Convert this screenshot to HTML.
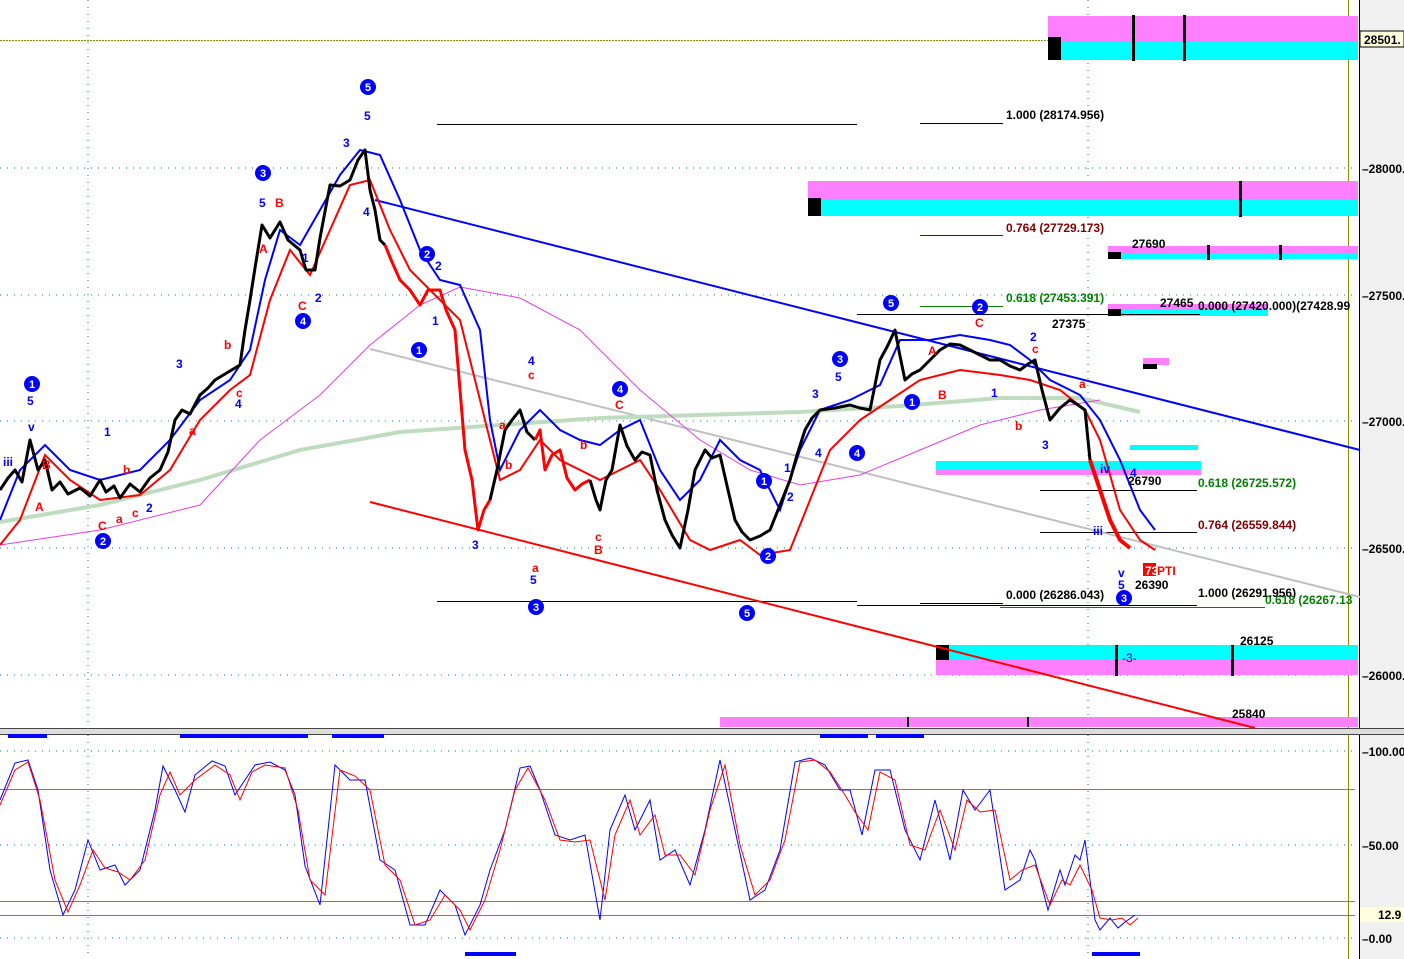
<!DOCTYPE html>
<html><head><meta charset="utf-8"><style>
html,body{margin:0;padding:0;background:#fff;}
svg{display:block;font-family:"Liberation Sans",sans-serif;}
</style></head><body>
<svg width="1404" height="959" viewBox="0 0 1404 959" xmlns="http://www.w3.org/2000/svg">
<rect width="1404" height="959" fill="#fff"/>
<rect x="1360" y="0" width="44" height="959" fill="#f0f0f0"/>
<line x1="1359.5" y1="0" x2="1359.5" y2="959" stroke="#000"/>
<line x1="1348.5" y1="0" x2="1348.5" y2="959" stroke="#8b8b00"/>
<rect x="0" y="729" width="1404" height="5" fill="#ddd"/>
<line x1="0" y1="728.5" x2="1404" y2="728.5" stroke="#444"/>
<line x1="0" y1="734.5" x2="1404" y2="734.5" stroke="#444"/>
<g stroke="#008080" stroke-dasharray="1,6">
<line x1="0" y1="168" x2="1355" y2="168"/><line x1="0" y1="295" x2="1355" y2="295"/>
<line x1="0" y1="421" x2="1355" y2="421"/><line x1="0" y1="548" x2="1355" y2="548"/>
<line x1="0" y1="675" x2="1355" y2="675"/>
<line x1="0" y1="751" x2="1355" y2="751"/><line x1="0" y1="845" x2="1355" y2="845"/>
<line x1="0" y1="938" x2="1355" y2="938"/>
<line x1="88" y1="0" x2="88" y2="959"/><line x1="1088" y1="0" x2="1088" y2="959"/>
</g>
<line x1="0" y1="40.5" x2="1360" y2="40.5" stroke="#8b8b00" stroke-dasharray="2,1"/>
<g stroke="#8b8b00"><line x1="0" y1="789.5" x2="1355" y2="789.5"/><line x1="0" y1="901.5" x2="1355" y2="901.5"/><line x1="0" y1="915.5" x2="1355" y2="915.5"/></g>
<g font-size="12" font-weight="bold" fill="#000">
<rect x="1360" y="31" width="44" height="16" fill="#ffffe0" stroke="#000"/>
<text x="1364" y="44">28501.</text>
<text x="1362" y="173">–28000.</text><text x="1362" y="300">–27500.</text>
<text x="1362" y="426">–27000.</text><text x="1362" y="553">–26500.</text>
<text x="1362" y="680">–26000.</text>
<text x="1362" y="756">–100.00</text><text x="1362" y="850">–50.00</text>
<rect x="1360" y="907" width="44" height="15" fill="#ffffe0"/>
<text x="1378" y="919">12.9</text><text x="1362" y="943">–0.00</text>
</g>
<rect x="1048" y="16" width="310" height="25" fill="#ff80ff"/><rect x="1048" y="41" width="310" height="19" fill="#00ffff"/><rect x="1048" y="37" width="13" height="23" fill="#000"/>
<rect x="1132" y="15" width="3" height="46" fill="#000"/><rect x="1183" y="15" width="3" height="46" fill="#000"/>
<rect x="808" y="181" width="550" height="19" fill="#ff80ff"/><rect x="808" y="200" width="550" height="16" fill="#00ffff"/><rect x="808" y="198" width="13" height="18" fill="#000"/>
<rect x="1239" y="181" width="3" height="36" fill="#000"/>
<rect x="1108" y="246" width="250" height="7" fill="#ff80ff"/><rect x="1108" y="253" width="250" height="6" fill="#00ffff"/><rect x="1108" y="252" width="13" height="7" fill="#000"/>
<rect x="1207" y="245" width="3" height="15" fill="#000"/><rect x="1279" y="245" width="3" height="15" fill="#000"/>
<rect x="1108" y="304" width="160" height="6" fill="#ff80ff"/><rect x="1108" y="310" width="160" height="6" fill="#00ffff"/><rect x="1108" y="309" width="13" height="7" fill="#000"/>
<rect x="1143" y="358" width="26" height="7" fill="#ff80ff"/><rect x="1143" y="364" width="14" height="5" fill="#000"/>
<rect x="1130" y="445" width="68" height="5" fill="#00ffff"/>
<rect x="936" y="461" width="265" height="9" fill="#00ffff"/><rect x="936" y="470" width="265" height="5" fill="#ff80ff"/>
<rect x="936" y="645" width="422" height="15" fill="#00ffff"/><rect x="936" y="660" width="422" height="15" fill="#ff80ff"/><rect x="936" y="645" width="13" height="15" fill="#000"/>
<rect x="1115" y="645" width="3" height="31" fill="#000"/><rect x="1231" y="645" width="3" height="31" fill="#000"/>
<rect x="720" y="717" width="638" height="10" fill="#ff80ff"/><rect x="907" y="717" width="2" height="10" fill="#000"/><rect x="1027" y="717" width="2" height="10" fill="#000"/>
<g stroke="#000"><line x1="437" y1="124.5" x2="857" y2="124.5"/><line x1="920" y1="123.5" x2="1003" y2="123.5"/>
<line x1="437" y1="601.5" x2="857" y2="601.5"/><line x1="920" y1="603.5" x2="1003" y2="603.5"/>
<line x1="857" y1="605.5" x2="1197" y2="605.5"/><line x1="1040" y1="490.5" x2="1197" y2="490.5"/>
<line x1="1040" y1="532.5" x2="1197" y2="532.5"/><line x1="857" y1="314.5" x2="1200" y2="314.5"/></g>
<line x1="920" y1="235.5" x2="1003" y2="235.5" stroke="#800000"/>
<line x1="920" y1="306.5" x2="1003" y2="306.5" stroke="#008000"/>
<line x1="1000" y1="607.5" x2="1265" y2="607.5" stroke="#008000"/>
<line x1="375" y1="200" x2="1360" y2="450" stroke="#0000ff" stroke-width="2"/>
<line x1="370" y1="349" x2="1360" y2="597" stroke="#c0c0c0" stroke-width="2"/>
<line x1="370" y1="502" x2="1255" y2="728" stroke="#ff0000" stroke-width="2"/>
<polyline fill="none" stroke="#c0dcc0" stroke-width="4" points="0,522 100,505 200,480 300,450 400,432 500,425 600,418 700,415 800,412 900,406 1000,398 1080,398 1140,412"/>
<polyline fill="none" stroke="#e040e0" stroke-width="1" points="0,545 100,530 200,505 260,440 320,395 370,345 420,305 460,287 520,298 580,330 640,390 700,440 750,470 800,485 860,475 920,450 980,425 1040,410 1100,400"/>
<polyline fill="none" stroke="#0000ff" stroke-width="2" points="0,520 20,470 45,445 70,470 100,480 140,470 170,440 200,400 230,380 250,350 265,280 280,230 300,245 320,210 340,175 360,150 380,155 400,200 420,250 440,280 460,285 480,330 490,420 500,470 520,430 540,410 560,430 580,440 600,445 620,430 640,420 660,470 680,500 700,480 720,440 740,460 760,470 780,510 800,450 820,410 850,400 880,385 900,340 930,340 960,335 990,340 1010,345 1030,360 1050,380 1080,395 1100,420 1120,460 1140,510 1155,530"/>
<polyline fill="none" stroke="#ff0000" stroke-width="2" points="0,545 20,520 45,455 70,480 100,500 140,495 170,470 200,420 230,390 250,375 270,300 290,250 310,275 330,230 350,185 370,180 390,230 410,270 440,300 460,320 480,400 500,480 520,470 540,440 560,460 580,470 600,480 620,470 640,460 660,490 690,540 710,550 740,540 760,555 790,550 810,500 830,450 860,420 890,400 920,380 960,370 1000,375 1030,380 1060,390 1085,410 1100,440 1120,510 1140,540 1155,550"/>
<g fill="none" stroke-width="3" stroke-linejoin="round">
<polyline stroke="#000" points="0,490 8,478 15,470 22,482 30,440 38,470 45,460 52,490 60,482 68,494 80,488 90,496 100,480 106,492 114,486 120,498 130,484 140,492 150,478 160,470 168,452 175,420 182,410 190,414 200,395 208,388 215,380 225,374 240,365 245,330 250,300 255,268 262,225 270,238 280,222 288,240 300,250 306,270 315,270 320,238 330,185 340,186 350,180 358,160 365,150 370,190 375,210 380,240 385,245"/>
<polyline stroke="#ff0000" points="385,245 392,262 400,280 410,290 420,305 428,290 440,290 446,310 455,330 460,390 465,450 472,480 478,530 484,510 490,500"/>
<polyline stroke="#000" points="490,500 497,470 505,430 512,420 520,410 527,432 535,440"/>
<polyline stroke="#ff0000" points="535,440 540,430 545,470 552,455 560,450 567,478 575,490 582,484 590,480"/>
<polyline stroke="#000" points="590,480 596,500 600,510 606,480 612,470 620,425 627,446 635,460 642,452 650,455 657,490 665,520 672,535 680,548 688,510 695,470 705,450 712,458 720,455 728,490 735,520 742,532 750,540 760,536 770,530 780,505 790,480 797,455 805,430 812,418 820,410 835,408 850,405 860,408 870,410 875,385 880,360 888,345 895,330 900,356 905,380 912,374 920,370 930,360 940,350 950,344 960,345 970,350 980,355 990,360 1000,360 1010,366 1020,370 1028,364 1035,360 1042,390 1050,420 1060,408 1070,400 1078,405 1085,410 1090,460"/>
<polyline stroke="#ff0000" stroke-width="4" points="1090,460 1100,490 1110,520 1120,540 1130,548"/>
</g>
<g font-size="12" font-weight="bold" fill="#0000ff">
<g fill="#00f"><circle cx="32" cy="384" r="8"/><circle cx="103" cy="541" r="8"/><circle cx="263" cy="173" r="8"/><circle cx="303" cy="321" r="8"/><circle cx="368" cy="87" r="8"/><circle cx="427" cy="254" r="8"/><circle cx="419" cy="350" r="8"/><circle cx="536" cy="607" r="8"/><circle cx="620" cy="389" r="8"/><circle cx="747" cy="613" r="8"/><circle cx="764" cy="481" r="8"/><circle cx="768" cy="556" r="8"/><circle cx="840" cy="359" r="8"/><circle cx="857" cy="453" r="8"/><circle cx="891" cy="303" r="8"/><circle cx="912" cy="402" r="8"/><circle cx="980" cy="307" r="8"/><circle cx="1124" cy="598" r="8"/></g>
<g fill="#fff" font-size="11" text-anchor="middle"><text x="32" y="388">1</text><text x="103" y="545">2</text><text x="263" y="177">3</text><text x="303" y="325">4</text><text x="368" y="91">5</text><text x="427" y="258">2</text><text x="419" y="354">1</text><text x="536" y="611">3</text><text x="620" y="393">4</text><text x="747" y="617">5</text><text x="764" y="485">1</text><text x="768" y="560">2</text><text x="840" y="363">3</text><text x="857" y="457">4</text><text x="891" y="307">5</text><text x="912" y="406">1</text><text x="980" y="311">2</text><text x="1124" y="602">3</text></g>
<text x="27" y="405">5</text><text x="28" y="431">v</text><text x="3" y="466">iii</text><text x="104" y="436">1</text><text x="146" y="512">2</text><text x="176" y="368">3</text><text x="259" y="207">5</text><text x="235" y="408">4</text><text x="315" y="302">2</text><text x="302" y="262">1</text><text x="343" y="147">3</text><text x="364" y="120">5</text><text x="363" y="216">4</text><text x="435" y="270">2</text><text x="432" y="325">1</text><text x="472" y="549">3</text><text x="528" y="365">4</text><text x="530" y="584">5</text><text x="812" y="398">3</text><text x="835" y="381">5</text><text x="815" y="457">4</text><text x="784" y="472">1</text><text x="787" y="501">2</text><text x="991" y="397">1</text><text x="1042" y="449">3</text><text x="1030" y="341">2</text><text x="1100" y="473">iv</text><text x="1093" y="535">iii</text><text x="1118" y="577">v</text><text x="1118" y="589">5</text><text x="1130" y="477">4</text>
<text x="1122" y="662" font-weight="normal">-3-</text>
</g>
<g font-size="12" font-weight="bold" fill="#ff0000">
<text x="35" y="511">A</text><text x="42" y="469">B</text><text x="98" y="530">C</text><text x="116" y="523">a</text><text x="132" y="517">c</text><text x="123" y="474">b</text><text x="189" y="435">a</text><text x="224" y="349">b</text><text x="236" y="397">c</text><text x="259" y="253">A</text><text x="275" y="207">B</text><text x="298" y="310">C</text><text x="499" y="429">a</text><text x="505" y="469">b</text><text x="528" y="379">c</text><text x="532" y="572">a</text><text x="580" y="449">b</text><text x="595" y="541">c</text><text x="594" y="554">B</text><text x="615" y="409">C</text><text x="928" y="355">A</text><text x="938" y="399">B</text><text x="975" y="327">C</text><text x="1015" y="430">b</text><text x="1032" y="353">c</text><text x="1079" y="388">a</text>
<rect x="1143" y="563" width="13" height="13" fill="#ff0000"/><text x="1145" y="575" fill="#fff">73</text><text x="1157" y="575">PTI</text>
</g>
<g font-size="12" font-weight="bold" fill="#000">
<text x="1006" y="119">1.000 (28174.956)</text>
<text x="1006" y="232" fill="#800000">0.764 (27729.173)</text>
<text x="1006" y="302" fill="#008000">0.618 (27453.391)</text>
<text x="1132" y="248">27690</text><text x="1160" y="307">27465</text><text x="1198" y="310">0.000 (27420.000)(27428.99</text>
<text x="1052" y="328">27375</text><text x="1128" y="485">26790</text>
<text x="1198" y="487" fill="#008000">0.618 (26725.572)</text>
<text x="1198" y="529" fill="#800000">0.764 (26559.844)</text>
<text x="1135" y="589">26390</text>
<text x="1006" y="599">0.000 (26286.043)</text><text x="1198" y="597">1.000 (26291.956)</text>
<text x="1265" y="604" fill="#008000">0.618 (26267.13</text>
<text x="1240" y="645">26125</text><text x="1232" y="718">25840</text>
</g>
<g fill="#0000ff"><rect x="8" y="734" width="39" height="4"/><rect x="180" y="734" width="128" height="4"/><rect x="332" y="734" width="52" height="4"/><rect x="820" y="734" width="48" height="4"/><rect x="876" y="734" width="48" height="4"/><rect x="465" y="952" width="51" height="4"/><rect x="1092" y="952" width="48" height="4"/></g>
<polyline fill="none" stroke="#0000ff" points="0,800 15,763 28,760 38,790 50,870 63,915 75,890 88,840 100,870 115,865 125,885 140,870 155,810 163,766 175,790 185,812 195,775 212,761 225,766 235,795 245,780 255,765 270,762 285,770 295,795 305,866 320,905 335,765 350,780 365,780 380,860 395,870 410,925 425,925 440,890 455,905 465,935 480,905 490,870 505,830 520,768 530,766 540,790 555,835 570,840 585,835 600,920 610,830 625,795 635,830 650,800 660,860 675,850 690,885 705,830 720,760 735,830 750,900 765,890 780,850 795,762 810,758 825,765 840,790 850,790 862,835 875,770 890,770 905,830 920,860 935,800 950,860 963,790 975,810 990,790 1005,890 1020,880 1030,850 1035,860 1048,910 1060,870 1065,885 1075,855 1080,860 1085,840 1095,920 1100,930 1110,918 1118,928 1125,922 1135,915"/>
<polyline fill="none" stroke="#ff0000" points="0,805 15,770 28,762 40,800 55,880 68,912 80,885 93,850 105,868 118,872 130,880 145,860 160,795 170,772 180,795 195,780 215,765 230,775 240,800 252,772 265,765 285,768 298,810 310,880 325,895 340,770 355,776 370,790 385,865 400,880 415,925 430,920 445,895 460,910 470,930 485,900 500,850 515,790 528,768 545,800 560,840 575,842 590,840 605,900 615,835 630,800 640,835 655,815 665,855 680,855 695,875 710,810 725,765 740,845 755,895 770,880 785,840 800,762 815,760 830,772 845,795 855,812 868,830 880,772 895,780 910,845 925,850 940,810 955,850 967,800 980,812 995,810 1010,880 1022,870 1035,865 1050,905 1062,880 1070,885 1080,865 1092,890 1100,918 1112,920 1122,918 1130,925 1138,918"/>
</svg>
</body></html>
